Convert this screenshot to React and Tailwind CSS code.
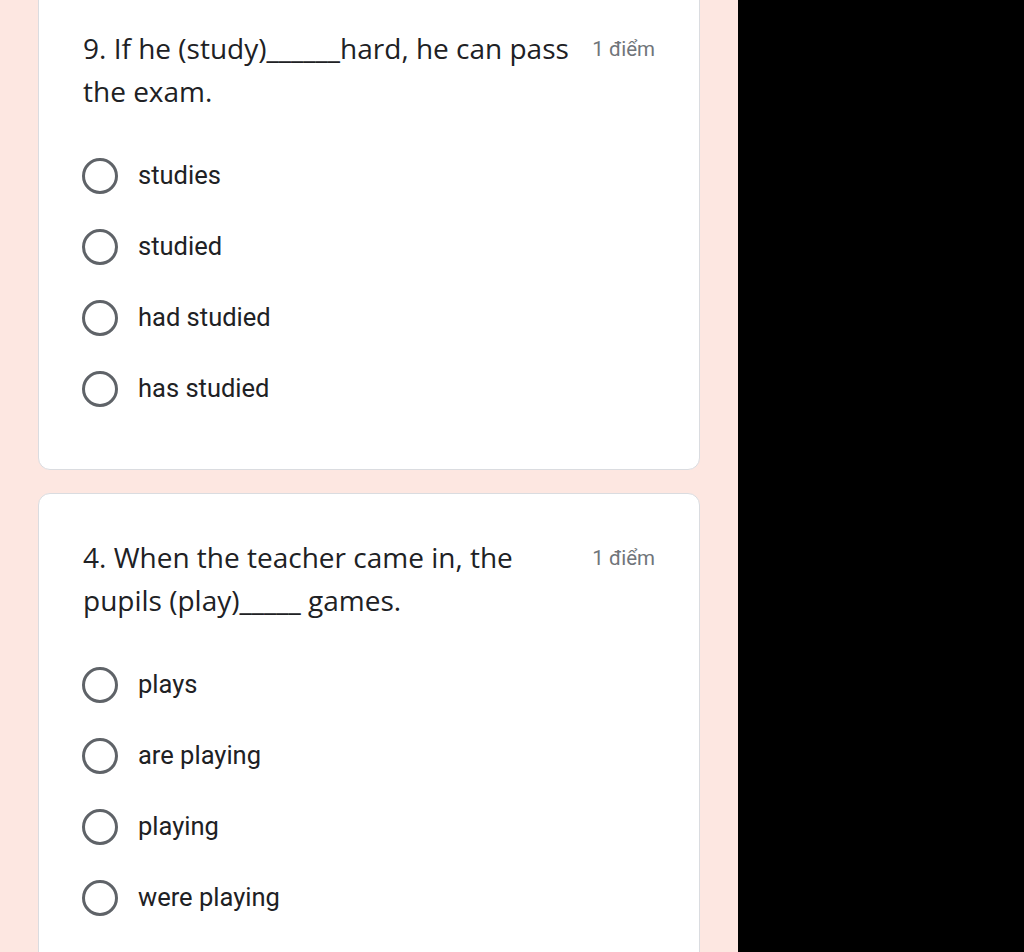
import React from 'react';

const questions = [
  {
    lines: ['9. If he (study)______hard, he can pass', 'the exam.'],
    points: '1 điểm',
    options: ['studies', 'studied', 'had studied', 'has studied'],
  },
  {
    lines: ['4. When the teacher came in, the', 'pupils (play)_____ games.'],
    points: '1 điểm',
    options: ['plays', 'are playing', 'playing', 'were playing'],
  },
];

function Radio({ label }) {
  return (
    <div className="flex items-center h-[71px]">
      <span className="ml-[-1px] w-[36px] h-[36px] rounded-full border-[3px] border-[#5f6368] shrink-0" />
      <span className="ml-[20px] text-[25.5px] text-[#202124] font-['Roboto',sans-serif]">{label}</span>
    </div>
  );
}

function QuestionCard({ q, className }) {
  return (
    <div className={`bg-white border border-[#dadce0] rounded-[12px] px-[44px] pt-[42px] pb-[45px] ${className}`}>
      <div className="flex justify-between items-start">
        <div className="text-[28px] leading-[43px] text-[#202124] font-['Open_Sans',sans-serif]">
          {q.lines.map((l, i) => (
            <div key={i} className="whitespace-nowrap">{l}</div>
          ))}
        </div>
        <div className="pt-[1px] text-[20.5px] leading-[43px] text-[#70757a] font-['Roboto',sans-serif] whitespace-nowrap">
          {q.points}
        </div>
      </div>
      <div className="mt-[27px]">
        {q.options.map((o) => (
          <Radio key={o} label={o} />
        ))}
      </div>
    </div>
  );
}

export default function App() {
  return (
    <div className="flex w-[1024px] h-[952px] overflow-hidden bg-black">
      <div className="w-[738px] bg-[#fde7e1] px-[38px]">
        <QuestionCard q={questions[0]} className="mt-[-16px]" />
        <QuestionCard q={questions[1]} className="mt-[23px]" />
      </div>
      <div className="flex-1 bg-black" />
    </div>
  );
}
